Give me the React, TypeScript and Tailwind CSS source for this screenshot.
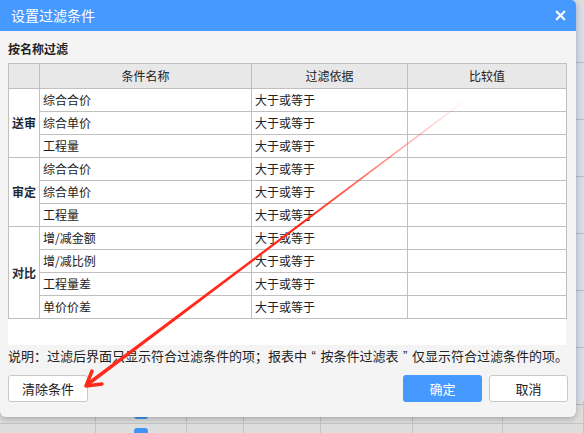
import { X } from 'lucide-react'

const GROUPS = [
  { label: '送审', items: ['综合合价', '综合单价', '工程量'] },
  { label: '审定', items: ['综合合价', '综合单价', '工程量'] },
  { label: '对比', items: ['增/减金额', '增/减比例', '工程量差', '单价价差'] },
]

const SHEET_COLS = [96, 91, 57, 77, 92, 90, 81]

function SheetRow({ value }: { value?: string }) {
  return (
    <div className="flex h-[23px] shrink-0 border-b border-[#c4c4c4]">
      {SHEET_COLS.map((w, i) => (
        <div
          key={i}
          style={{ width: w }}
          className="flex shrink-0 items-center justify-center border-r border-[#c4c4c4]"
        >
          {i === 1 && <span className="size-[14px] rounded-[3px] bg-[#3f95f6]" />}
          {i === 5 && value && (
            <span className="w-full pr-[12px] pt-[12px] text-right text-[12px] text-[#222]">{value}</span>
          )}
        </div>
      ))}
    </div>
  )
}

function Sheet() {
  return (
    <div className="flex h-full flex-col bg-[#dedede]">
      <div className="flex h-[401px] shrink-0">
        <div className="flex-1" />
        <div className="flex w-[8px] flex-col bg-[#d6deec]">
          <div className="h-[6px] shrink-0 bg-[#dedede]" />
          {Array.from({ length: 7 }).map((_, i) => (
            <div key={i} className="h-[57px] shrink-0 border-b border-[#b9bec6]" />
          ))}
        </div>
      </div>
      <SheetRow />
      <SheetRow value="400110.10" />
    </div>
  )
}

function FilterTable() {
  const cell = 'border border-[#c0c0c0] px-[3px] text-left font-normal'
  return (
    <table className="w-[558px] table-fixed border-collapse text-[12px] text-[#222]">
      <colgroup>
        <col className="w-[31px]" />
        <col className="w-[212px]" />
        <col className="w-[156px]" />
        <col className="w-[159px]" />
      </colgroup>
      <thead>
        <tr className="h-[25px] bg-[#e8e8e8]">
          <th className="border border-[#c0c0c0]" />
          <th className="border border-[#c0c0c0] font-normal">条件名称</th>
          <th className="border border-[#c0c0c0] font-normal">过滤依据</th>
          <th className="border border-[#c0c0c0] font-normal">比较值</th>
        </tr>
      </thead>
      <tbody>
        {GROUPS.map((g) =>
          g.items.map((item, i) => (
            <tr key={g.label + item} className="h-[23px]">
              {i === 0 && (
                <td
                  rowSpan={g.items.length}
                  className="border border-[#c0c0c0] text-center font-bold text-[#1d2a3a]"
                >
                  {g.label}
                </td>
              )}
              <td className={cell}>{item}</td>
              <td className={cell}>大于或等于</td>
              <td className={cell} />
            </tr>
          )),
        )}
      </tbody>
    </table>
  )
}

// spaced quote mark, as the desktop font draws it
function Q({ children }: { children: string }) {
  return <span className="inline-block w-[19px] text-center font-['Liberation_Sans']">{children}</span>
}

export default function App() {
  return (
    <div
      lang="zh-CN"
      className="relative h-[433px] w-[584px] overflow-hidden"
      style={{ fontFamily: '"Noto Sans CJK SC", "Liberation Sans", sans-serif' }}
    >
      <Sheet />

      {/* dialog */}
      <div className="absolute left-0 top-0 flex h-[417px] w-[576px] flex-col overflow-hidden rounded-b-[6px] rounded-tr-[5px] bg-[#f4f4f4] shadow-[0_2px_6px_rgba(0,0,0,0.25)]">
        <div className="flex h-[31px] shrink-0 items-center justify-between bg-[#4599ff] pl-[11px] pr-[8px]">
          <span className="text-[14px] text-white">设置过滤条件</span>
          <X className="size-[15px] text-white" strokeWidth={3.5} />
        </div>

        <div className="flex flex-1 flex-col px-[8px]">
          <div className="pb-[6px] pt-[10px] text-[12px] font-bold leading-[16px] text-[#222]">按名称过滤</div>

          <div className="h-[282px] w-[558px] shrink-0 bg-white">
            <FilterTable />
          </div>

          <div className="flex h-[22px] shrink-0 items-center whitespace-nowrap text-[13px] text-[#222]">
            说明：过滤后界面只显示符合过滤条件的项；报表中<Q>“</Q>按条件过滤表<Q>”</Q>仅显示符合过滤条件的项。
          </div>

          <div className="mt-[8px] flex h-[27px] items-center">
            <button className="h-[27px] w-[80px] rounded-[3px] border border-[#c8c8c8] bg-white text-[13px] text-[#222]">
              清除条件
            </button>
            <div className="flex-1" />
            <button className="h-[27px] w-[79px] rounded-[3px] bg-[#4599ff] text-[13px] text-white">确定</button>
            <button className="ml-[7px] h-[27px] w-[79px] rounded-[3px] border border-[#c8c8c8] bg-white text-[13px] text-[#222]">
              取消
            </button>
          </div>
        </div>
      </div>

      {/* red annotation arrow */}
      <svg className="pointer-events-none absolute left-0 top-0" width="584" height="433">
        <defs>
          <linearGradient id="fade" gradientUnits="userSpaceOnUse" x1="463" y1="102" x2="300" y2="225">
            <stop offset="0" stopColor="#ff2a1a" stopOpacity="0.05" />
            <stop offset="1" stopColor="#ff2a1a" stopOpacity="1" />
          </linearGradient>
        </defs>
        <polygon points="463.3,102.4 462.7,101.6 86.9,382.6 89.1,385.4" fill="url(#fade)" />
        <polyline
          points="92,371 86,386 102,384"
          fill="none"
          stroke="#ff2a1a"
          strokeWidth="3.5"
          strokeLinecap="round"
          strokeLinejoin="round"
        />
      </svg>
    </div>
  )
}
